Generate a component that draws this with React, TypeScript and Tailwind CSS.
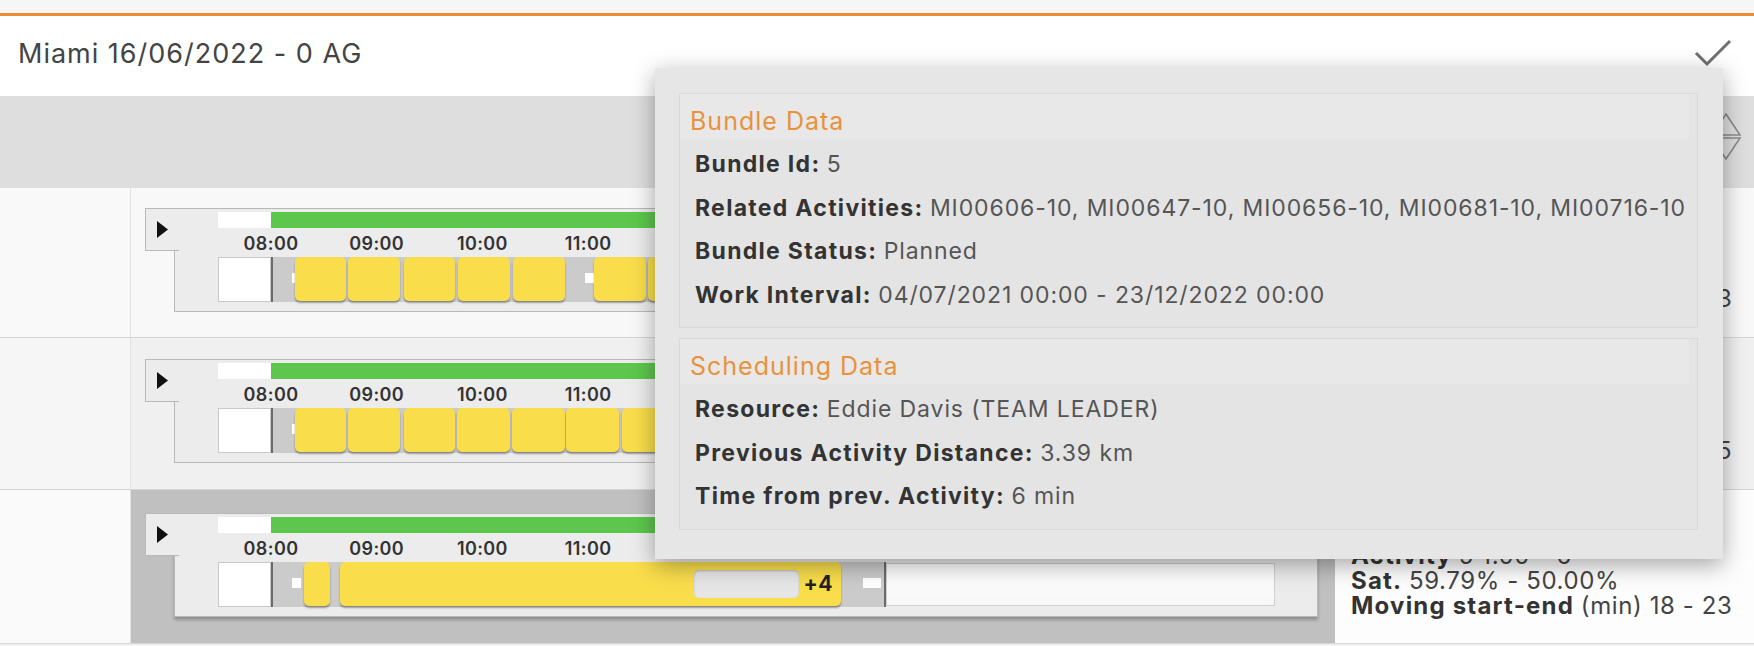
import React from "react";

// only the hours left of the tooltip are ever visible
const HOURS = ["08:00", "09:00", "10:00", "11:00"];
const HOUR_X = [53, 158.7, 264.4, 370.1];

type Act = { left: number; width: number; more?: number };

type RowData = {
  height: string;
  padTop: string;
  statsTop: string;
  selected?: boolean;
  bg: string;
  dots: number[];
  acts: Act[];
  stats: [string, string][];
};

const ROWS: RowData[] = [
  {
    height: "h-[150px]",
    padTop: "pt-[20px]",
    statsTop: "pt-[98px]",
    bg: "bg-[#f8f8f8]",
    dots: [74, 367],
    acts: [
      { left: 77, width: 51 },
      { left: 130, width: 52 },
      { left: 186, width: 51 },
      { left: 240, width: 52 },
      { left: 295, width: 52 },
      { left: 376, width: 52 },
      { left: 430, width: 52 },
      { left: 484, width: 52 },
      { left: 538, width: 52 },
    ],
    stats: [["Moving start-end", "(min) 18 - 23"]],
  },
  {
    height: "h-[152px]",
    padTop: "pt-[21px]",
    statsTop: "pt-[100px]",
    bg: "bg-[#f0f0f0]",
    dots: [74],
    acts: [
      { left: 77, width: 51 },
      { left: 130, width: 52 },
      { left: 186, width: 51 },
      { left: 239, width: 53 },
      { left: 294, width: 53 },
      { left: 348, width: 53 },
      { left: 404, width: 52 },
      { left: 458, width: 52 },
      { left: 512, width: 52 },
    ],
    stats: [["Moving start-end", "(min) 18 - 25"]],
  },
  {
    height: "h-[154px]",
    padTop: "pt-[23px]",
    statsTop: "pt-[53px]",
    selected: true,
    bg: "bg-[#f0f0f0]",
    dots: [74],
    acts: [
      { left: 86, width: 26 },
      { left: 122, width: 501, more: 4 },
    ],
    stats: [
      ["Activity", "5 1.00 - 6"],
      ["Sat.", "59.79% - 50.00%"],
      ["Moving start-end", "(min) 18 - 23"],
    ],
  },
];

function Timeline({ row }: { row: RowData }) {
  return (
    <div
      className={
        "relative w-[1144px] border border-[#b9b9b9] bg-[#ececec] pl-[43px] pt-[3px] pb-[9px] " +
        (row.selected ? "shadow-[0_3px_3px_rgba(0,0,0,0.25)]" : "")
      }
    >
      {/* expander tab */}
      <div className="absolute left-[-30px] top-[-1px] flex h-[43px] w-[34px] items-center justify-center border border-r-0 border-[#b9b9b9] bg-[#ececec]">
        <svg width="11" height="17" viewBox="0 0 11 17">
          <polygon points="0,0 11,8.5 0,17" fill="#111" />
        </svg>
      </div>

      {/* shift bar */}
      <div className="flex h-[16px] w-[1057px]">
        <div className="w-[53px] bg-white" />
        <div className="w-[614px] bg-[#5cc74c]" />
        <div className="flex-1 bg-white" />
      </div>

      {/* hours */}
      <div className="relative h-[29px] w-[1057px]">
        {HOURS.map((h, i) => (
          <span
            key={h}
            className="absolute top-[5px] -translate-x-1/2 text-[18px] leading-[21px] font-semibold tracking-[0.4px] text-[#333]"
            style={{ left: HOUR_X[i] }}
          >
            {h}
          </span>
        ))}
      </div>

      {/* activities */}
      <div className="relative h-[45px] w-[1057px]">
        <div className="absolute left-0 top-0 h-[45px] w-[53px] border border-[#c9c9c9] bg-white" />
        <div className="absolute left-[53px] top-0 h-[45px] w-[614px] bg-[#cbcbcb]" />
        <div className="absolute left-[53px] top-0 h-[45px] w-[2px] bg-[#6b6b6b]" />
        <div className="absolute left-[666px] top-0 h-[45px] w-[2px] bg-[#6b6b6b]" />
        <div className="absolute left-[668px] top-[1px] h-[43px] w-[389px] border border-[#cfcfcf] bg-gradient-to-b from-white to-[#f7f7f7]" />
        <div className="absolute left-[645px] top-[16px] h-[10px] w-[18px] bg-white" />
        {row.dots.map((d) => (
          <div key={d} className="absolute top-[16px] h-[10px] w-[9px] bg-white" style={{ left: d }} />
        ))}
        {row.acts.map((a) => (
          <div
            key={a.left}
            className="absolute top-0 flex h-[44px] items-center justify-end rounded-[5px] bg-[#f9dd4b] shadow-[0_2px_2px_rgba(0,0,0,0.35)]"
            style={{ left: a.left, width: a.width }}
          >
            {a.more ? (
              <>
                <div className="h-[28px] w-[105px] rounded-[5px] bg-[#e6e6e6] shadow-[inset_0_1px_2px_rgba(0,0,0,0.2)]" />
                <span className="ml-[5px] mr-[8px] text-[21px] font-bold tracking-[0.5px] text-[#222]">+{a.more}</span>
              </>
            ) : null}
          </div>
        ))}
      </div>
    </div>
  );
}

function Line({ label, value }: { label: string; value: string }) {
  return (
    <div className="w-fit whitespace-nowrap">
      <span className="font-bold tracking-[1.3px] text-[#333]">{label}:</span>{" "}
      <span className="tracking-[0.9px] text-[#555]">{value}</span>
    </div>
  );
}

function Section({ title, lines }: { title: string; lines: [string, string][] }) {
  return (
    <div className="border border-[#d9d9d9] bg-[#e4e4e4] pb-[10px]">
      <div className="mr-[8px] h-[45px] bg-[#e8e8e8] pl-[10px] pt-[12px] text-[25px] leading-[30px] tracking-[1px] text-[#e8923c]">
        {title}
      </div>
      <div className="mt-[4px] pl-[15px] text-[23px] leading-[43.5px]">
        {lines.map(([l, v]) => (
          <Line key={l} label={l} value={v} />
        ))}
      </div>
    </div>
  );
}

export default function App() {
  return (
    <div className="relative h-[646px] w-[1754px] overflow-hidden bg-[#f0f0f0] font-[Inter,sans-serif]">
      <div className="h-[13px] bg-[#f6f6f6]" />
      <div className="h-[3px] bg-[#ec8c34]" />

      {/* header */}
      <div className="flex h-[80px] items-center justify-between bg-white pl-[18px] pr-[22px]">
        <div className="mb-[4px] text-[27px] tracking-[1px] text-[#444]">Miami 16/06/2022 - 0 AG</div>
        <svg width="38" height="32" viewBox="0 0 38 32" className="mt-[-6px]">
          <polyline points="2,16 13,27 36,4" fill="none" stroke="#6f6f6f" strokeWidth="3" />
        </svg>
      </div>

      {/* column header band */}
      <div className="flex h-[92px] justify-end bg-[#dedede] pr-[12px] pt-[17px]">
        <svg width="32" height="47" viewBox="0 0 32 47">
          <polygon points="16,1 30,22 2,22" fill="none" stroke="#8a8a8a" strokeWidth="1.6" />
          <polygon points="2,25 30,25 16,46" fill="none" stroke="#8a8a8a" strokeWidth="1.6" />
        </svg>
      </div>

      {/* rows */}
      {ROWS.map((row, i) => (
        <div key={i} className={"flex border-b border-[#d6d6d6] " + row.height + " " + row.bg}>
          <div
            className={
              "w-[131px] shrink-0 border-r border-[#e2e2e2] " + (row.selected ? "bg-[#fafafa]" : "bg-[#fafafa]/60")
            }
          />
          <div
            className={
              "w-[1204px] shrink-0 pl-[43px] " + row.padTop + " " + (row.selected ? "bg-[#c0c0c0]" : "")
            }
          >
            <Timeline row={row} />
          </div>
          <div
            className={
              "flex-1 pl-[16px] text-[24px] leading-[25px] " + row.statsTop + " " + (row.selected ? "bg-[#fdfdfd]" : "")
            }
          >
            {row.stats.map(([l, v]) => (
              <div key={l} className="w-fit whitespace-nowrap">
                <span className="font-bold tracking-[1.2px] text-[#333]">{l}</span>{" "}
                <span className="tracking-[0.6px] text-[#444]">{v}</span>
              </div>
            ))}
          </div>
        </div>
      ))}

      {/* hover popup */}
      <div className="absolute left-[655px] top-[68px] h-[491px] w-[1068px] bg-[#e6e6e6] pl-[24px] pr-[25px] pt-[25px] shadow-[0_6px_22px_rgba(0,0,0,0.35)]">
        <Section
          title="Bundle Data"
          lines={[
            ["Bundle Id", "5"],
            ["Related Activities", "MI00606-10, MI00647-10, MI00656-10, MI00681-10, MI00716-10"],
            ["Bundle Status", "Planned"],
            ["Work Interval", "04/07/2021 00:00 - 23/12/2022 00:00"],
          ]}
        />
        <div className="h-[10px]" />
        <Section
          title="Scheduling Data"
          lines={[
            ["Resource", "Eddie Davis (TEAM LEADER)"],
            ["Previous Activity Distance", "3.39 km"],
            ["Time from prev. Activity", "6 min"],
          ]}
        />
      </div>
    </div>
  );
}
